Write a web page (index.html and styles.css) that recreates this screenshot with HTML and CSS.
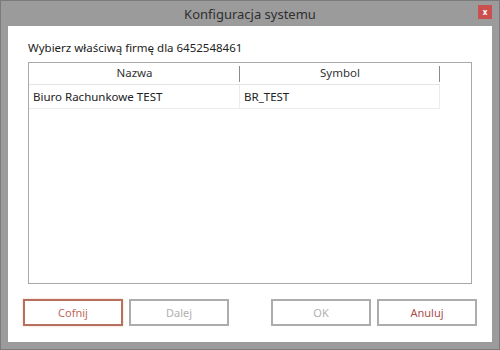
FILE: index.html
```html
<!DOCTYPE html>
<html lang="pl">
<head>
    <meta charset="UTF-8">
    <title>Konfiguracja systemu</title>
    <link rel="stylesheet" href="styles.css">
</head>
<body>
    <div class="window">
        <div class="titlebar">
            <span class="title">Konfiguracja systemu</span>
            <span class="close">x</span>
        </div>
        <div class="content">
            <div class="label">Wybierz właściwą firmę dla 6452548461</div>
            <div class="grid">
                <div class="grid-head">
                    <div class="head-cell">Nazwa</div>
                    <div class="head-cell">Symbol</div>
                </div>
                <div class="grid-row">
                    <div class="cell">Biuro Rachunkowe TEST</div>
                    <div class="cell">BR_TEST</div>
                </div>
            </div>
            <div class="buttons">
                <div class="group">
                    <button class="btn btn-active">Cofnij</button>
                    <button class="btn btn-disabled">Dalej</button>
                </div>
                <div class="group">
                    <button class="btn btn-disabled">OK</button>
                    <button class="btn btn-cancel">Anuluj</button>
                </div>
            </div>
        </div>
    </div>
</body>
</html>
```

FILE: styles.css
```css
* {
    margin: 0;
    padding: 0;
    box-sizing: border-box;
    font-family: 'Noto Sans', 'Open Sans', sans-serif;
}

body {
    width: 500px;
    height: 350px;
    overflow: hidden;
}

.window {
    width: 500px;
    height: 350px;
    background: #9b9b9b;
    border: 1px solid #7a7a7a;
    padding: 0 7px 7px;
    display: flex;
    flex-direction: column;
}

.titlebar {
    height: 25px;
    display: flex;
    align-items: center;
    justify-content: center;
    position: relative;
}

.titlebar .title {
    font-size: 13px;
    color: #2f2f2f;
}

.titlebar .close {
    position: absolute;
    right: 0;
    top: 4px;
    width: 14px;
    height: 14px;
    background: #c9504e;
    color: #fff;
    font-size: 8px;
    font-weight: bold;
    line-height: 13px;
    text-align: center;
}

.content {
    flex: 1;
    background: #fff;
    padding: 14px 0 16px;
    display: flex;
    flex-direction: column;
}

.label {
    font-size: 11.5px;
    color: #222;
    line-height: 16px;
    padding-left: 20px;
    margin-bottom: 6px;
}

.grid {
    margin: 0 20px;
    height: 222px;
    border: 1px solid #a8a8a8;
}

.grid-head,
.grid-row {
    display: flex;
    width: 411px;
}

.grid-head {
    height: 22px;
    border-bottom: 1px solid #e4e4e4;
}

.head-cell {
    font-size: 11.5px;
    color: #333;
    text-align: center;
    line-height: 20px;
    position: relative;
}

.head-cell:first-child,
.cell:first-child {
    width: 211px;
}

.head-cell:last-child,
.cell:last-child {
    width: 200px;
}

.head-cell::after {
    content: '';
    position: absolute;
    right: 0;
    top: 3px;
    width: 1px;
    height: 16px;
    background: #8a8a8a;
}

.grid-row {
    height: 24px;
    border-bottom: 1px solid #ececec;
}

.cell {
    font-size: 11.5px;
    color: #222;
    line-height: 23px;
    padding-left: 4px;
    border-right: 1px solid #ececec;
}

.cell:first-child {
    padding-left: 4px;
}

.buttons {
    margin-top: auto;
    display: flex;
    justify-content: space-between;
    padding: 0 15px;
}

.group {
    display: flex;
    gap: 6px;
}

.btn {
    width: 100px;
    height: 27px;
    background: #fff;
    border: 2px solid #acacac;
    font-size: 11px;
    color: #b0b0b0;
}

.btn-active {
    border-color: #b8705e;
    color: #c06a5e;
    box-shadow: 0 0 2px #f0c8b8;
}

.btn-cancel {
    color: #a8504e;
}
```
